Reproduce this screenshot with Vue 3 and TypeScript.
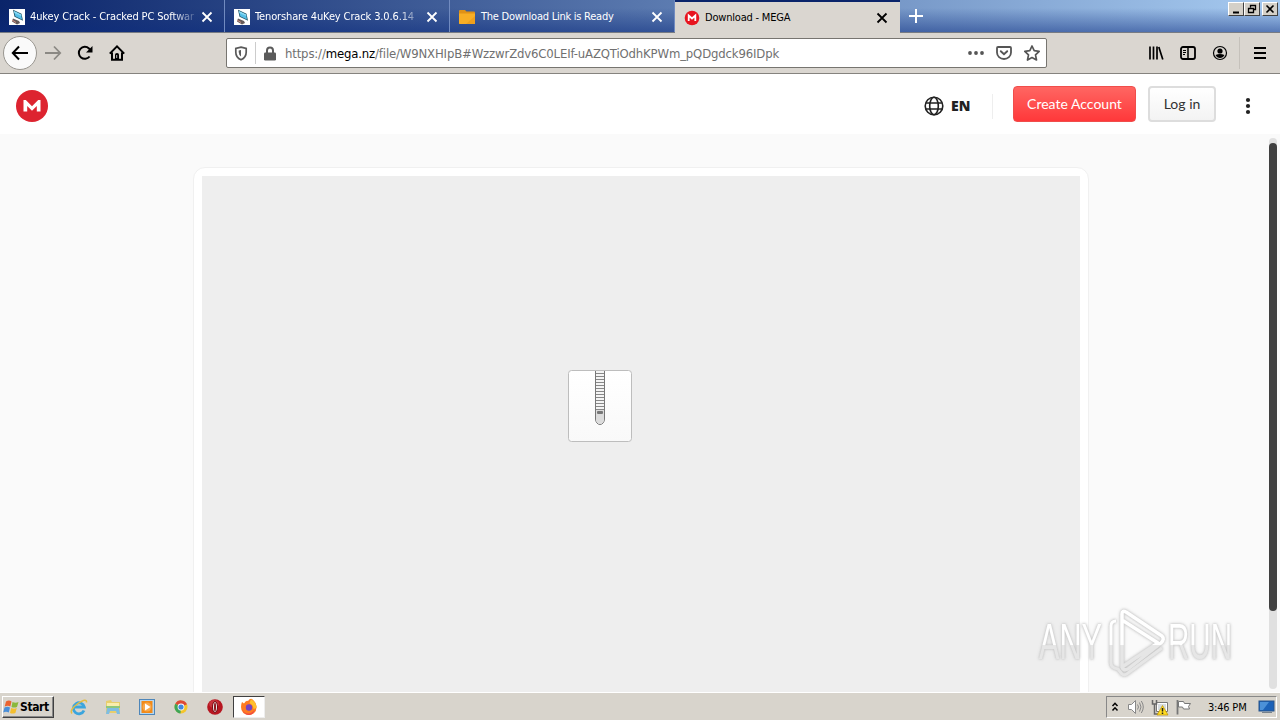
<script setup lang="ts">
interface Tab {
  title: string
  icon: 'pc' | 'folder' | 'mega'
  active?: boolean
  fade?: boolean
}

const tabs: Tab[] = [
  { title: '4ukey Crack - Cracked PC Softwar', icon: 'pc', fade: true },
  { title: 'Tenorshare 4uKey Crack 3.0.6.14', icon: 'pc', fade: true },
  { title: 'The Download Link is Ready', icon: 'folder' },
  { title: 'Download - MEGA', icon: 'mega', active: true },
]
const rungs: number[] = Array.from({ length: 13 }, (_, i) => 3.5 + i * 3)
</script>

<template>
  <div class="screen">
    <header class="tabbar">
      <div v-for="(tab, i) in tabs" :key="tab.title" class="tab" :class="[`t${i}`, { active: tab.active }]">
        <svg class="fav" viewBox="0 0 16 16">
          <template v-if="tab.icon === 'pc'">
            <path d="M0 0h16v16H0z" fill="#fff" />
            <path d="M4 .8l8.500 4 1.500 7-8.500-4z" fill="#256" />
            <path d="M5 2l7 3.500 1 5-6.700-3.200z" fill="#55bfe8" />
            <path d="M5 2l7 3.500.3 1.500L5.400 4z" fill="#8bdaf3" />
            <path d="M4 9.500l6 2.500 1 2-3 1.500-5-3z" fill="#655a58" />
            <path d="M3 11l4 2.500" stroke="#cf8f86" />
          </template>
          <template v-else-if="tab.icon === 'folder'">
            <path d="M0 2q0-1 1-1h5l1.500 1.500H15q1 0 1 1v10.500q0 1-1 1H1q-1 0-1-1z" fill="#e09116" />
            <path d="M0 4.500h16V14q0 1-1 1H1q-1 0-1-1z" fill="#f8ae25" />
            <path d="M7 15l9-8v7q0 1-1 1z" fill="#efa01c" />
          </template>
          <template v-else>
            <circle cx="8" cy="8" r="7.300" fill="#e8141f" />
            <path d="M4.700 11V5.500L8 8.500l3.300-3V11" fill="none" stroke="#fff" stroke-width="1.800" />
          </template>
        </svg>
        <span class="title" :class="{ fade: tab.fade }">{{ tab.title }}</span>
        <svg class="close" viewBox="0 0 12 12"><path d="M1.500 1.500l9 9M10.500 1.500l-9 9" stroke="currentColor" stroke-width="1.800" /></svg>
      </div>
      <svg class="plus" viewBox="0 0 14 14"><path d="M7 0v14M0 7h14" stroke="#fff" stroke-width="2" /></svg>
      <div class="winbtns">
        <svg class="wb" viewBox="0 0 14 12"><path d="M4 9.500h6" stroke="#000" stroke-width="2" /></svg>
        <svg class="wb" viewBox="0 0 14 12"><path d="M5.500 4.500V2.500h5v4H9M5 2.500h6M3.500 5.500h5v4h-5zM3 5.500h6" fill="none" stroke="#000" stroke-width="1.300" /></svg>
        <svg class="wb last" viewBox="0 0 14 12"><path d="M3.500 2.500l7 7M10.500 2.500l-7 7" stroke="#000" stroke-width="1.600" /></svg>
      </div>
    </header>

    <nav class="toolbar">
      <div class="back">
        <svg width="18" height="16" viewBox="0 0 18 16"><path d="M17 8H2M8 1.500L1.800 8 8 14.500" fill="none" stroke="#000" stroke-width="2" /></svg>
      </div>
      <svg class="fwd" width="18" height="16" viewBox="0 0 18 16"><path d="M1 8h15M10 1.500L16.200 8 10 14.500" fill="none" stroke="#8b8984" stroke-width="1.800" /></svg>
      <svg class="reload" width="16" height="16" viewBox="0 0 16 16"><path d="M12.600 11.500A6 6 0 1 1 12 3.500l1 1" fill="none" stroke="#000" stroke-width="2" /><path d="M15.500 1v6.500H9z" fill="#000" /></svg>
      <svg class="home" width="16" height="16" viewBox="0 0 16 16"><path d="M.8 8.600L8 1.400l7.200 7.200M3 7.500v7.300h10V7.500" fill="none" stroke="#000" stroke-width="2" /><path d="M6 15V9.500q0-1.500 2-1.500t2 1.500V15z" fill="#000" /><path d="M7.700 10v3" stroke="#bbb" /></svg>
      <div class="url">
        <svg class="shield" width="14" height="15" viewBox="0 0 14 15"><path d="M7 1.200l5.200 1.200v3.800Q12.200 11.500 7 13.800 1.800 11.500 1.800 6.200V2.400z" fill="none" stroke="#5a5a5a" stroke-width="1.700" /><path d="M7 4v6.500Q4.800 9 4.700 6V4.500z" fill="#5a5a5a" /></svg>
        <i class="bar"></i>
        <svg class="lock" width="12" height="15" viewBox="0 0 12 15"><path d="M3 7V4.500a3 3 0 0 1 6 0V7" fill="none" stroke="#5b5b5b" stroke-width="2" /><rect y="6.500" width="12" height="8" rx="1.200" fill="#5b5b5b" /></svg>
        <span class="address">https://<b>mega.nz</b>/file/W9NXHIpB#WzzwrZdv6C0LEIf-uAZQTiOdhKPWm_pQDgdck96IDpk</span>
        <svg class="dots" width="16" height="16" viewBox="0 0 16 16" fill="#555"><circle cx="2" cy="8" r="1.900" /><circle cx="8" cy="8" r="1.900" /><circle cx="14" cy="8" r="1.900" /></svg>
        <svg class="pocket" width="16" height="16" viewBox="0 0 16 16" fill="none" stroke="#555"><path d="M2 2h12q1 0 1 1v4.500a7 6.500 0 0 1-14 0V3q0-1 1-1z" stroke-width="1.800" /><path d="M4.800 6.200L8 9.200l3.200-3" stroke-width="1.900" stroke-linecap="round" /></svg>
        <svg class="star" width="16" height="16" viewBox="0 0 16 16"><path d="M8 1l2.200 4.700 5 .6-3.700 3.500 1 5.200L8 12.500 3.500 15l1-5.200L.8 6.300l5-.6z" fill="none" stroke="#555" stroke-width="1.700" stroke-linejoin="round" /></svg>
      </div>
      <div class="tools">
        <svg width="16" height="16" viewBox="0 0 16 16"><path d="M2 1.500v13M5.500 1.500v13M9 1.500v13M10.800 2l4 12.500" fill="none" stroke="#000" stroke-width="1.700" /></svg>
        <svg width="16" height="16" viewBox="0 0 16 16" fill="none" stroke="#000"><rect x="1" y="2" width="14" height="12" rx="2" stroke-width="1.800" /><path d="M8 2v12" stroke-width="1.500" /><path d="M3 5.500h3M3 7.500h3M3 9.500h2" stroke-width="1" /></svg>
        <svg width="16" height="16" viewBox="0 0 16 16"><circle cx="8" cy="8" r="6.500" fill="none" stroke="#000" stroke-width="1.200" /><circle cx="8" cy="6" r="2.600" /><path d="M3.500 10q4.500-2 9 0-1.500 3-4.500 3t-4.500-3z" /></svg>
        <i></i>
        <svg width="14" height="16" viewBox="0 0 14 16"><path d="M1 3h12M1 8h12M1 13h12" stroke="#000" stroke-width="2" /></svg>
      </div>
    </nav>

    <section class="megabar">
      <svg class="logo" width="32" height="32" viewBox="0 0 32 32"><circle cx="16" cy="16" r="16" fill="#dd2430" /><path d="M7.500 21.500V10h2.300l6.200 6.300 6.200-6.300h2.300v11.500h-3.700v-5.600L16 20.800l-4.800-4.900v5.600z" fill="#fff" /></svg>
      <svg class="globe" width="20" height="20" viewBox="0 0 20 20" fill="none" stroke="#222" stroke-width="1.600"><circle cx="10" cy="10" r="8.800" /><ellipse cx="10" cy="10" rx="4.300" ry="8.800" /><path d="M2 7h16M2 13h16" /></svg>
      <span class="lang">EN</span>
      <i class="split"></i>
      <button class="create">Create Account</button>
      <button class="login">Log in</button>
      <svg class="more" width="6" height="18" viewBox="0 0 6 18" fill="#222"><circle cx="3" cy="3" r="2.100" /><circle cx="3" cy="9" r="2.100" /><circle cx="3" cy="15" r="2.100" /></svg>
    </section>

    <main class="content">
      <div class="card">
        <div class="preview">
          <svg width="64" height="72" viewBox="0 0 64 72">
            <defs><linearGradient id="paper" x2="0" y2="1"><stop stop-color="#fff" /><stop offset="1" stop-color="#f9f9f9" /></linearGradient></defs>
            <rect x=".5" y=".5" width="63" height="71" rx="3" fill="url(#paper)" stroke="#bdbdbd" />
            <path d="M27.500 1v48a4.500 5.500 0 0 0 9 0V1" fill="#f4f4f4" stroke="#777" />
            <path v-for="y in rungs" :key="y" :d="`M28 ${y}h8`" stroke="#888" />
            <path d="M28 40h8v9a4 5 0 0 1-8 0z" fill="#dcdcdc" />
            <rect x="29" y="41" width="6" height="3" rx="1" fill="#777" />
          </svg>
        </div>
      </div>
      <div class="scroll"><div class="thumb"></div></div>
      <svg class="watermark" width="210" height="76" viewBox="0 0 210 76">
        <defs>
          <linearGradient id="glass" x1="0" y1="0" x2="0" y2="76" gradientUnits="userSpaceOnUse">
            <stop offset=".51" stop-color="#fff" /><stop offset=".52" stop-color="#e6e6e6" />
          </linearGradient>
        </defs>
        <g class="mark" fill="url(#glass)">
          <text x="9" y="53" textLength="63" lengthAdjust="spacingAndGlyphs">ANY</text>
          <text x="138" y="53" textLength="64" lengthAdjust="spacingAndGlyphs">RUN</text>
          <g fill="none" stroke="url(#glass)" stroke-width="3.500" stroke-linejoin="round">
            <path d="M92 55V8q0-4 4-2l36 24q3 3-1 7L98 63q-5 2-6-2V14l36 23-36 24" />
            <path d="M86 15q-5 0-5 5v37q0 5 7 6l4 5q3 2 6-1l34-25" stroke-width="3" />
          </g>
        </g>
      </svg>
    </main>

    <footer class="taskbar">
      <div class="start">
        <svg width="17" height="16" viewBox="0 0 17 15"><path d="M3 2q3-2 5.500 0L7.300 7Q5 5.500 1.700 7z" fill="#ea6330" /><path d="M9.500 2.500q3 1.500 6 0L14 7.500q-3 1.200-5.500 0z" fill="#8ab83c" /><path d="M1.500 8q3-1.500 5.500 0l-1.200 5Q3 11.500.2 13z" fill="#4a8fd8" /><path d="M8.200 8.500q3 1.500 5.600 0l-1.400 5q-3 1.200-5.400 0z" fill="#f4bf2f" /></svg>
        <span>Start</span>
      </div>
      <div class="apps">
        <svg width="18" height="18" viewBox="0 0 18 18"><path d="M14 12.500A5.500 5.500 0 1 1 14.300 9H5" fill="none" stroke="#3ba5dd" stroke-width="2.800" /><path d="M2 15.500Q-1 12 8 5.500 17-.5 16.500 4.500" fill="none" stroke="#e4bd42" stroke-width="1.500" /></svg>
        <svg width="18" height="18" viewBox="0 0 18 18"><path d="M2 3l5-1 1 2h8v11H2z" fill="#e8ce6c" /><path d="M3 5h12v5H3z" fill="#f9edac" /><path d="M2 8h14v2H2z" fill="#8fc77a" /><path d="M3 10h12l1 6h-3l-1-3H6l-1 3H2z" fill="#7ebde3" /></svg>
        <svg width="18" height="18" viewBox="0 0 18 18"><rect x="1.500" y="1.500" width="15" height="15" fill="#b6d7f0" stroke="#4e86b9" /><rect x="3.500" y="3" width="11" height="12" fill="#f28a18" /><circle cx="9" cy="9" r="4.500" fill="#f8a84a" /><path d="M7 5.500l5.500 3.500L7 12.500z" fill="#fff" /></svg>
        <svg width="18" height="18" viewBox="0 0 18 18"><circle cx="9" cy="9" r="6.500" fill="#f4c52b" /><path d="M9 9L3.300 5.800A6.500 6.500 0 0 1 15 6.300z" fill="#dd4937" /><path d="M9 9L3.300 5.800A6.500 6.500 0 0 0 8.500 15.500z" fill="#3fa557" /><circle cx="9" cy="9" r="3.400" fill="#fff" /><circle cx="9" cy="9" r="2.600" fill="#4187df" /></svg>
        <svg width="18" height="18" viewBox="0 0 18 18"><circle cx="9" cy="9" r="7.800" fill="#b71620" /><ellipse cx="8" cy="6" rx="5" ry="4" fill="#d75055" opacity=".5" /><ellipse cx="9" cy="9" rx="2.500" ry="5.500" fill="#eee" stroke="#76060d" /><ellipse cx="9" cy="9" rx="1" ry="4.500" fill="#8e151b" /></svg>
      </div>
      <div class="running">
        <svg width="18" height="18" viewBox="0 0 18 18"><path d="M2 4l2 1.500Q6 2 8 3q2-3 4-2 4 3 4.500 7 .5 8-7.500 9-8-1-8-8 0-3 1-5z" fill="#ff7b22" /><path d="M11 1q6 4 5.500 9l-3 1q0-4-4-6z" fill="#ffc12e" /><path d="M2 11q3 6 9 4l4-3q-2 5-6 5-5 0-7-6z" fill="#f04b43" /><circle cx="9" cy="9.500" r="3.200" fill="#7444c3" /></svg>
      </div>
      <div class="tray">
        <svg width="8" height="12" viewBox="0 0 8 12"><path d="M1.500 5L4 2.300 6.500 5M1.500 9.500L4 6.800l2.500 2.700" fill="none" stroke="#000" stroke-width="1.500" /></svg>
        <svg width="17" height="16" viewBox="0 0 17 16" stroke="#888"><path d="M1.500 5.500h3l4-4v13l-4-4h-3z" fill="#fff" /><path d="M10.500 5.500q2 2.500 0 5M12.500 3.500q3 4.500 0 9M14.300 2q4 6 0 12" fill="none" /></svg>
        <svg width="18" height="17" viewBox="0 0 18 17"><path d="M5.500 3.500h11v9h-11z" fill="#fff" stroke="#777" /><path d="M7 5h8v6H7z" fill="#d7dce0" /><path d="M1.500 1v4h4V1M3.500 5v10h5" fill="none" stroke="#666" stroke-width="1.500" /><path d="M11.500 6.500l5.500 9.500H6z" fill="#ffdc22" stroke="#bb9100" stroke-width=".7" /><path d="M11.500 9v3.500M11.500 13.500V15" stroke="#222" stroke-width="1.500" /></svg>
        <svg width="17" height="16" viewBox="0 0 17 16"><path d="M2.500 1v14.500" stroke="#777" stroke-width="1.800" /><path d="M3.500 2.500h5l1 2h6l-2 3 1 2.500H8.500l-1-2h-4z" fill="#fff" stroke="#777" /></svg>
        <span>3:46 PM</span>
        <svg width="17" height="14" viewBox="0 0 17 14"><rect x="1" y="1" width="15" height="10" fill="#1c62b8" stroke="#28548a" /><path d="M2 2h9L5 10H2z" fill="#4c91d8" /><path d="M4 12.500h10" stroke="#78828b" /></svg>
      </div>
    </footer>
  </div>
</template>

<style>
html, body { overflow: hidden; background: #fafafa; }
</style>

<style scoped>
.screen { width: 1280px; height: 720px; display: flex; flex-direction: column; overflow: hidden; font: 11px "DejaVu Sans Condensed", "DejaVu Sans", sans-serif; }
.screen * { box-sizing: border-box; flex-shrink: 0; }
svg { display: block; }
.tabbar { height: 33px; display: flex; background: linear-gradient(180deg, transparent 25%, rgba(10,42,125,.5)), linear-gradient(90deg, #0a246a, #a6caf0); border-bottom: 1px solid #777b83; }
.tab { width: 225px; height: 32px; display: flex; align-items: center; padding: 2px 11px 0 9px; border-right: 1px solid #718bc0; color: #fff; }
.tab.active { height: 33px; color: #000; background: #dad6d0; border-top: 2px solid #0a246a; border-right: 0; padding: 0 12px 0 9px; }
.fav { width: 16px; height: 16px; margin-right: 5px; }
.title { width: 166px; overflow: hidden; white-space: nowrap; letter-spacing: -.13px; line-height: 16px; }
.t2 .title { padding-left: 1px; letter-spacing: -.25px; }
.active .title { letter-spacing: -.2px; }
.fade { mask-image: linear-gradient(90deg, #000 86%, transparent 102%); }
.close { width: 12px; height: 12px; margin-left: auto; }
.plus { width: 14px; height: 14px; margin: 9px 0 0 9px; }
.winbtns { display: flex; margin: 2px 2px 0 auto; }
.wb { width: 16px; height: 14px; background: #d4d0c8; border: 1px solid; border-color: #fff #404040 #404040 #fff; }
.wb.last { margin-left: 2px; }
.toolbar { height: 41px; display: flex; align-items: center; background: #dad6d0; border-bottom: 1px solid #85837e; }
.back { width: 34px; height: 34px; margin-left: 3px; border: 1px solid #999690; border-radius: 50%; background: #fafafa; display: grid; place-items: center; }
.fwd { margin-left: 7px; }
.reload { margin-left: 15px; }
.home { margin-left: 16px; }
.url { width: 821px; height: 30px; margin-left: 101px; display: flex; align-items: center; background: #fff; border: 1px solid #777570; border-radius: 2px; }
.shield { margin-left: 7px; }
.bar { width: 1px; height: 22px; background: #ccc; margin-left: 7px; }
.lock { margin-left: 8px; }
.address { margin-left: 9px; width: 680px; font-size: 13px; color: #707070; letter-spacing: -.155px; white-space: nowrap; }
.address b { font-weight: 400; color: #000; }
.dots { margin-left: 3px; }
.pocket { margin-left: 12px; }
.star { margin-left: 12px; }
.tools { display: flex; align-items: center; gap: 16px; margin-left: 101px; }
.tools i { width: 1px; height: 32px; background: #c5c1bb; margin: 0 -3px 0 -5px; }
.megabar { height: 60px; display: flex; align-items: center; background: #fff; color: #222; padding: 0 29px 0 16px; font-family: Lato, sans-serif; }
.logo { margin-top: 4px; }
.globe { margin: 3px 0 0 876px; }
.lang { font: 800 14px "Open Sans", sans-serif; width: 23px; margin: 2px 0 0 7px; }
.split { width: 1px; height: 25px; background: #eee; margin: 4px 0 0 18px; }
button { height: 36px; border-radius: 4px; font: 14px Lato, sans-serif; padding: 0 0 2px; }
.create { width: 123px; margin-left: 20px; color: #fff; border: 1px solid #f04d4b; background: linear-gradient(#ff6662, #ff383a); }
.login { width: 68px; margin-left: 12px; color: #333; border: 2px solid #ddd; background: linear-gradient(#fff, #f3f3f3); }
.more { margin: 4px 0 0 auto; }
.content { height: 558px; position: relative; background: #fafafa; overflow: hidden; }
.card { width: 896px; height: 560px; margin: 33px 0 0 193px; padding: 8px; background: #fff; border: 1px solid #f0f0f0; border-radius: 12px; }
.preview { width: 878px; height: 560px; background: #eee; padding: 194px 0 0 366px; }
.scroll { position: absolute; right: 3px; top: 4px; width: 8px; height: 551px; border-radius: 4px; background: #e0e0e0; }
.thumb { height: 468px; margin-top: 5px; border-radius: 4px; background: #404040; }
.watermark { position: absolute; left: 1030px; top: 472px; }
.mark { filter: drop-shadow(0 0 1px #c4c4c4) drop-shadow(0 0 1.5px #d5d5d5); font: 50px "Liberation Sans", sans-serif; }
.taskbar { height: 28px; display: flex; align-items: center; background: #d8d4cc; border-top: 1px solid #fff; padding: 1px 3px 0 2px; }
.start { width: 52px; height: 22px; display: flex; align-items: center; border: 1px solid; border-color: #fff #404040 #404040 #fff; box-shadow: inset -1px -1px #888; font: bold 12px "DejaVu Sans Condensed", "DejaVu Sans", sans-serif; padding-left: 0; letter-spacing: -.4px; }
.apps { display: flex; gap: 16px; margin-left: 16px; }
.running { width: 32px; height: 22px; margin-left: 9px; display: grid; place-items: center; background: #fff; border: 1px solid; border-color: #404040 #eee #eee #404040; }
.tray { width: 171px; height: 22px; margin-left: auto; display: flex; align-items: center; border: 1px solid; border-color: #888 #fff #fff #888; padding-left: 4px; }
.tray svg { margin-right: 8px; }
.tray svg:nth-child(3) { margin-right: 6px; margin-left: -1px; }
.tray span { width: 42px; margin: 0 8px 0 8px; white-space: nowrap; letter-spacing: -.2px; }
.tray svg:last-child { margin-right: 0; }
</style>
